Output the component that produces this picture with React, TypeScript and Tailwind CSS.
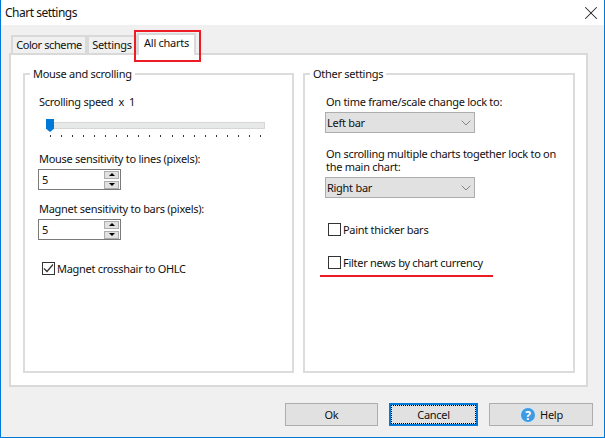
import React from 'react';
import { X, ChevronDown } from 'lucide-react';

const Tab = ({ label, active, className }: { label: string; active?: boolean; className: string }) => (
  <div
    className={`flex justify-center border-2 border-b-0 border-[#d9d9d9] ${className} ${
      active ? 'relative z-10 -mb-[2px] h-[22px] bg-white' : 'h-[18px] items-center bg-[#f0f0f0]'
    }`}
  >
    {label}
  </div>
);

const Group = ({ title, className, children }: { title: string; className: string; children: React.ReactNode }) => (
  <fieldset className={`h-[307px] border-2 border-[#dcdcdc] ${className}`}>
    <legend className="ml-[5px] px-[3px] leading-4">{title}</legend>
    {children}
  </fieldset>
);

const Spin = () => (
  <div className="mt-[2px] flex h-[21px] w-[83px] items-center justify-between border border-[#7a7a7a] bg-white pl-[3px] pr-[1px]">
    <span>5</span>
    <div className="flex flex-col gap-[2px]">
      <div className="flex h-[8px] w-[15px] items-center justify-center border border-[#adadad] bg-[#e1e1e1]">
        <div className="h-0 w-0 border-x-[3px] border-b-[3px] border-x-transparent border-b-black" />
      </div>
      <div className="flex h-[8px] w-[15px] items-center justify-center border border-[#adadad] bg-[#e1e1e1]">
        <div className="h-0 w-0 border-x-[3px] border-t-[3px] border-x-transparent border-t-black" />
      </div>
    </div>
  </div>
);

const Select = ({ value, className }: { value: string; className: string }) => (
  <div className={`flex h-[21px] w-[150px] items-center justify-between border border-[#adadad] bg-[#e1e1e1] pl-[1px] ${className}`}>
    <span>{value}</span>
    <ChevronDown className="h-4 w-4 text-[#555]" strokeWidth={1} />
  </div>
);

const Check = ({ checked, label, className }: { checked?: boolean; label: string; className: string }) => (
  <div className={`flex h-[13px] items-center gap-[2px] ${className}`}>
    <div className="flex h-[13px] w-[13px] items-center justify-center border border-[#333] bg-white">
      {checked && (
        <svg viewBox="0 0 11 11" className="h-[11px] w-[11px]">
          <path d="M1 5.5 L4 8.5 L10 1.5" fill="none" stroke="#333" strokeWidth="1.2" />
        </svg>
      )}
    </div>
    <span>{label}</span>
  </div>
);

const Button = ({ className, children }: { className: string; children: React.ReactNode }) => (
  <div className={`flex h-[23px] items-center justify-center bg-[#e1e1e1] ${className}`}>
    {children}
  </div>
);

export default function App() {
  const ticks = Array.from({ length: 20 });

  return (
    <div className="relative flex h-[438px] w-[605px] flex-col border-x border-b border-x-[#0078d7] border-b-[#0078d7] bg-[#f0f0f0] font-['Noto_Sans',sans-serif] text-[11px] leading-4 tracking-[-0.28px] text-[#111]">
      <div className="flex h-[25px] items-center justify-between bg-white pl-1 pr-[2px] text-[12px] tracking-[-0.5px]">
        <span>Chart settings</span>
        <X className="h-[22px] w-[22px] text-[#222]" strokeWidth={1.1} />
      </div>

      <div className="flex h-[28px] items-end pl-[10px]">
        <Tab label="Color scheme" className="w-[76px] tracking-[-0.4px]" />
        <Tab label="Settings" className="w-[50px]" />
        <Tab label="All charts" active className="w-[59px]" />
      </div>

      <div className="ml-[8px] flex h-[334px] w-[579px] gap-[9px] border-2 border-[#d9d9d9] bg-white pl-[12px] pt-[11px]">
        <Group title="Mouse and scrolling" className="w-[271px]">
          <div className="pl-[13px]">
            <div className="pl-[1px] pt-[12px]">Scrolling speed&nbsp; x&nbsp; 1</div>
            <div className="relative ml-[8px] mt-[12px] h-[7px] w-[219px] border border-[#d6d6d6] bg-[#e7e9e8]">
              <div className="absolute -left-px -top-[4px] h-[13px] w-[8px] bg-[#0078d7] [clip-path:polygon(0_0,100%_0,100%_75%,50%_100%,0_75%)]" />
            </div>
            <div className="ml-[12px] mt-[6px] flex w-[211px] justify-between">
              {ticks.map((_, i) => (
                <div key={i} className="h-[2px] w-px bg-[#333]" />
              ))}
            </div>
            <div className="mt-[14px] pl-[1px]">Mouse sensitivity to lines (pixels):</div>
            <Spin />
            <div className="mt-[11px] pl-[1px]">Magnet sensitivity to bars (pixels):</div>
            <Spin />
            <Check checked label="Magnet crosshair to OHLC" className="ml-[4px] mt-[22px]" />
          </div>
        </Group>

        <Group title="Other settings" className="w-[272px]">
          <div className="pl-[20px]">
            <div className="pl-[1px] pt-[12px]">On time frame/scale change lock to:</div>
            <Select value="Left bar" className="mt-[2px]" />
            <div className="mt-[14px] w-[235px] pl-[1px] leading-[13px]">On scrolling multiple charts together lock to on the main chart:</div>
            <Select value="Right bar" className="mt-[4px]" />
            <Check label="Paint thicker bars" className="ml-[3px] mt-[25px]" />
            <Check label="Filter news by chart currency" className="ml-[3px] mt-[20px]" />
          </div>
        </Group>
      </div>

      <div className="mt-[16px] flex pl-[284px]">
        <Button className="w-[93px] border border-[#adadad]">Ok</Button>
        <Button className="relative ml-[11px] w-[89px] border-2 border-[#0078d7]">
          <div className="pointer-events-none absolute inset-0 border border-dotted border-black" />
          Cancel
        </Button>
        <Button className="ml-[11px] w-[104px] gap-[3px] border border-[#adadad]">
          <svg viewBox="0 0 18 18" className="h-[18px] w-[18px]">
            <circle cx="9" cy="9" r="8.5" fill="#d4e6f5" />
            <circle cx="9" cy="9" r="7" fill="#3f9be0" />
            <text x="9" y="13.5" textAnchor="middle" fontSize="12" fontWeight="700" fill="#fff">?</text>
          </svg>
          Help
        </Button>
      </div>

      <div className="absolute left-[133px] top-[30px] h-[32px] w-[67px] border-2 border-[#ed1c24]" />
      <div className="absolute left-[319px] top-[275px] h-[2px] w-[173px] bg-[#ed1c24]" />
    </div>
  );
}
